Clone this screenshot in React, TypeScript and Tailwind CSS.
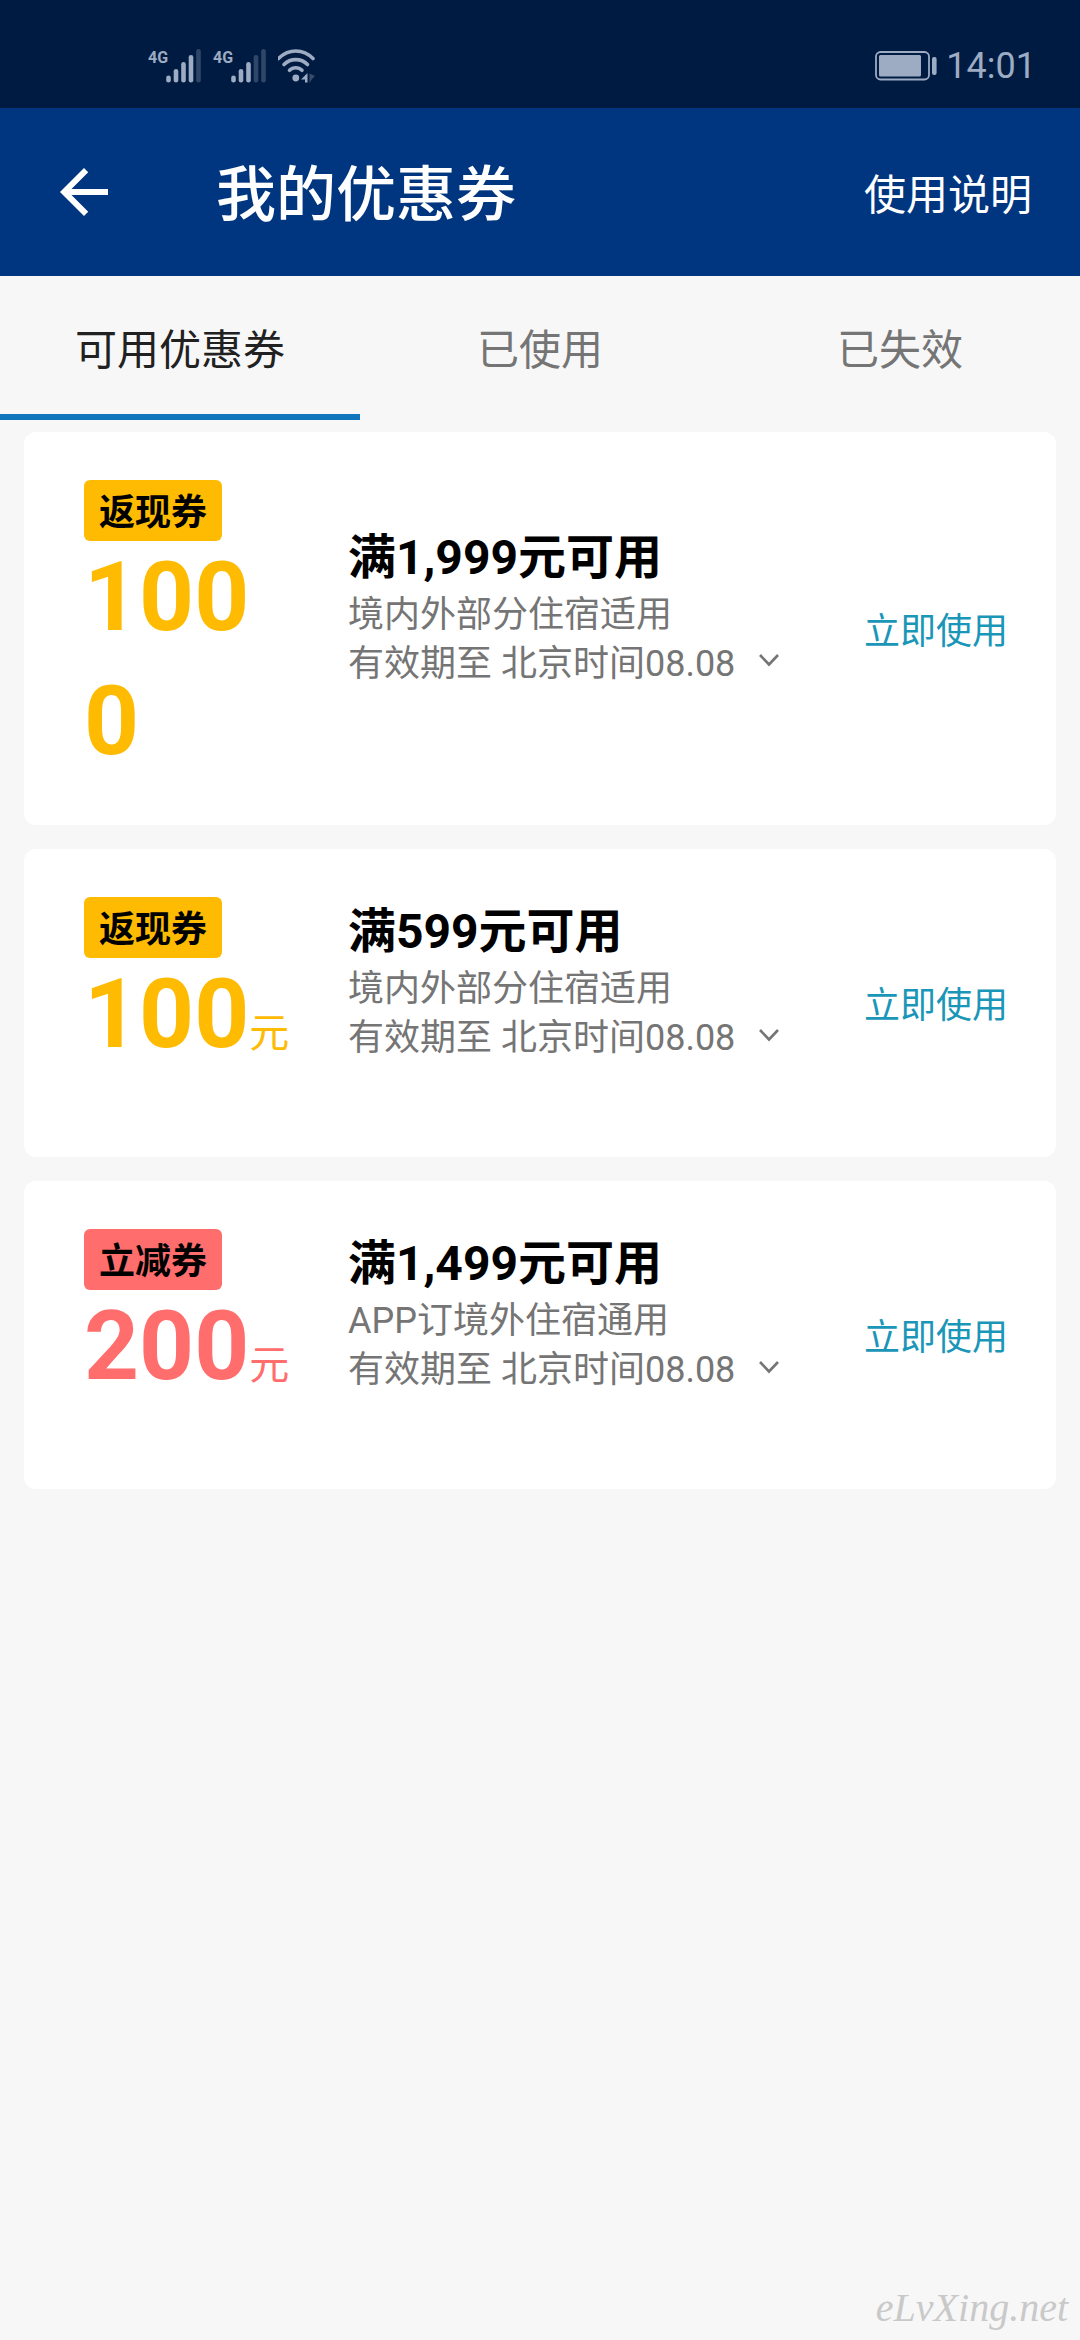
import { useState } from 'react';
import { MdArrowBack } from 'react-icons/md';
import clsx from 'clsx';

type Coupon = {
  id: number;
  tag: string;
  kind: 'cashback' | 'discount';
  amount: number;
  title: string;
  scope: string;
  expiry: string;
};

const tabs = ['可用优惠券', '已使用', '已失效'];

const coupons: Coupon[] = [
  { id: 1, tag: '返现券', kind: 'cashback', amount: 1000, title: '满1,999元可用', scope: '境内外部分住宿适用', expiry: '有效期至 北京时间08.08' },
  { id: 2, tag: '返现券', kind: 'cashback', amount: 100, title: '满599元可用', scope: '境内外部分住宿适用', expiry: '有效期至 北京时间08.08' },
  { id: 3, tag: '立减券', kind: 'discount', amount: 200, title: '满1,499元可用', scope: 'APP订境外住宿通用', expiry: '有效期至 北京时间08.08' },
];

const Signal = ({ level }: { level: number }) => (
  <div className="flex h-9 items-start">
    <span className="w-[18px] font-['Liberation_Sans_Narrow',Roboto] text-base leading-5 font-bold">4G</span>
    <svg width="36" height="36" viewBox="0 0 36 36" fill="currentColor" aria-hidden="true">
      {[7, 13.5, 20.5, 27.5, 33.5].map((h, i) => (
        <rect key={h} x={0.2 + i * 7.5} y={34.5 - h} width="4.6" height={h} rx="2.3" opacity={i < level ? 1 : 0.3} />
      ))}
    </svg>
  </div>
);

const StatusBar = () => (
  <div className="flex h-27 items-center justify-between bg-[#001b41] pt-6 pr-11 pl-37 text-[#9dabc3]">
    <div className="flex items-center gap-[11px]">
      <Signal level={4} />
      <Signal level={3} />
      <svg width="40" height="36" viewBox="0 0 40 36" fill="none" stroke="currentColor" strokeLinecap="round" aria-hidden="true">
        <g strokeWidth="3.6">
          <path d="M0.5 10.5C10.5 0.5 25 0.5 35 10.5" />
          <path d="M6 16.5C12.5 10 23 10 29.5 16.5" />
          <path d="M11.5 22.3C15 18.8 20.5 18.8 24 22.3" />
        </g>
        <circle cx="17.8" cy="30" r="3.4" fill="currentColor" stroke="none" />
        <path d="M29.5 25v9.5h-2.5v-3h-4z" fill="currentColor" stroke="none" />
        <path d="M31.5 25.5l5.5 2.5-3 3-2.5 4z" fill="currentColor" stroke="none" opacity="0.35" />
      </svg>
    </div>
    <div className="flex items-center gap-[9px]">
      <svg width="62" height="30" viewBox="0 0 62 30" fill="none" aria-hidden="true">
        <rect x="1" y="1" width="53" height="27.5" rx="4.5" stroke="currentColor" strokeWidth="1.8" />
        <rect x="4" y="4" width="42" height="21.5" rx="1.5" fill="currentColor" />
        <rect x="57" y="6" width="4.6" height="18" rx="2" fill="currentColor" />
      </svg>
      <span className="text-4xl">14:01</span>
    </div>
  </div>
);

const CouponCard = ({ coupon }: { coupon: Coupon }) => {
  const [open, setOpen] = useState(false);
  const cashback = coupon.kind === 'cashback';

  return (
    <li className="flex min-h-[308px] items-center rounded-xl bg-white pr-12 pl-15">
      {/* 面额 */}
      <div className="w-66 shrink-0 self-start pt-12 pb-[42px]">
        <span
          className={clsx(
            'block h-[61px] w-[138px] rounded-md text-center text-4xl leading-[66px] font-bold text-black',
            cashback ? 'bg-[#febb02]' : 'bg-[#ff6d6d]'
          )}
        >
          {coupon.tag}
        </span>
        <p
          className={clsx(
            '-mt-1.5 w-[208px] text-8xl leading-[124px] font-bold break-all',
            cashback ? 'text-[#febb02]' : 'text-[#ff6d6d]'
          )}
        >
          {coupon.amount}
          {coupon.amount < 1000 && <span className="text-[40px] leading-none font-normal">元</span>}
        </p>
      </div>

      {/* 使用条件 */}
      <div className="flex-1 pb-11">
        <h2 className="text-5xl leading-[66px] font-bold text-black">{coupon.title}</h2>
        <p className="text-4xl leading-[49px] text-[#757575]">{coupon.scope}</p>
        <button
          type="button"
          aria-expanded={open}
          onClick={() => setOpen(!open)}
          className="flex items-center gap-6 text-4xl leading-[49px] text-[#757575]"
        >
          {coupon.expiry}
          <svg width="20" height="14" viewBox="0 0 20 14" fill="none" stroke="currentColor" strokeWidth="2.6" className={clsx('mb-1.5', open && 'rotate-180')} aria-hidden="true">
            <path d="M1 1l9 9.5L19 1" />
          </svg>
        </button>
      </div>

      <a href="#use" className="pt-1.5 text-4xl text-[#1a96b8]">立即使用</a>
    </li>
  );
};

const App = () => {
  const [active, setActive] = useState(0);

  return (
    <div className="flex min-h-screen flex-col bg-[#f7f7f7] font-[Roboto,'Noto_Sans_CJK_SC',sans-serif]">
      <StatusBar />

      <header className="flex h-42 items-center bg-[#003580] pr-12 pl-12 text-white">
        <button type="button" aria-label="返回">
          <MdArrowBack className="size-18" />
        </button>
        <h1 className="ml-24 flex-1 pt-2 text-6xl font-medium">我的优惠券</h1>
        <a href="#help" className="pt-1.5 text-[42px]">使用说明</a>
      </header>

      <div role="tablist" className="grid grid-cols-3">
        {tabs.map((tab, i) => (
          <button
            key={tab}
            type="button"
            role="tab"
            aria-selected={i === active}
            onClick={() => setActive(i)}
            className={clsx(
              'h-36 border-b-6 pt-2.5 text-[42px]',
              i === active ? 'border-[#0f75bc] text-[#212121]' : 'border-transparent text-[#757575]'
            )}
          >
            {tab}
          </button>
        ))}
      </div>

      <ul className="flex flex-col gap-6 px-6 pt-3">
        {coupons.map(coupon => (
          <CouponCard key={coupon.id} coupon={coupon} />
        ))}
      </ul>

      <footer className="mt-auto pr-3 pb-2 text-right font-['Liberation_Serif',serif] text-[40px] leading-12 text-[#c9c9c9] italic">
        eLvXing.net
      </footer>
    </div>
  );
};

export default App;
